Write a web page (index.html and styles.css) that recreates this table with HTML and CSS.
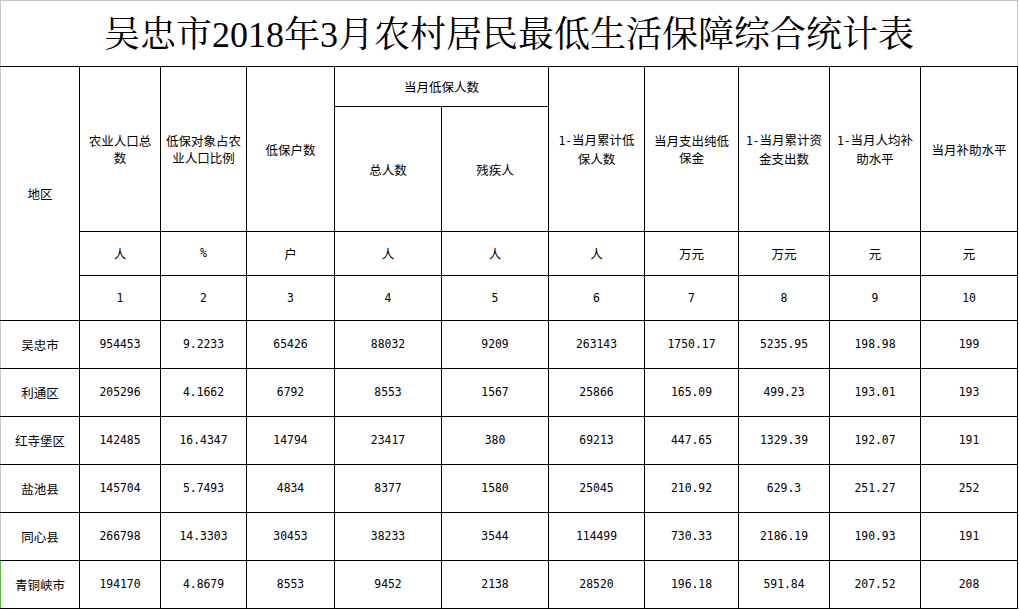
FILE: index.html
```html
<!DOCTYPE html>
<html lang="zh-CN">
<head>
<meta charset="utf-8">
<title>吴忠市2018年3月农村居民最低生活保障综合统计表</title>
<link rel="stylesheet" href="styles.css">
</head>
<body>
<table class="sheet">
  <colgroup>
    <col class="c0"><col class="c1"><col class="c2"><col class="c3"><col class="c4"><col class="c5"><col class="c6"><col class="c7"><col class="c8"><col class="c9"><col class="c10">
  </colgroup>
  <tr class="strip">
    <td></td><td></td><td></td><td></td><td></td><td></td><td></td><td></td><td></td><td></td><td></td>
  </tr>
  <tr class="title-row">
    <td class="title" colspan="11"><span class="num-s">吴忠市2018年3月农村居民最低生活保障综合统计表</span></td>
  </tr>
  <tr class="h1">
    <td class="area" rowspan="4">地区</td>
    <td class="hd" rowspan="2">农业人口总<br>数</td>
    <td class="hd" rowspan="2">低保对象占农<br>业人口比例</td>
    <td class="hd" rowspan="2">低保户数</td>
    <td class="hd" colspan="2">当月低保人数</td>
    <td class="hd" rowspan="2"><span class="n">1-</span>当月累计低<br>保人数</td>
    <td class="hd" rowspan="2">当月支出纯低<br>保金</td>
    <td class="hd" rowspan="2"><span class="n">1-</span>当月累计资<br>金支出数</td>
    <td class="hd" rowspan="2"><span class="n">1-</span>当月人均补<br>助水平</td>
    <td class="hd" rowspan="2">当月补助水平</td>
  </tr>
  <tr class="h2">
    <td class="hd">总人数</td>
    <td class="hd">残疾人</td>
  </tr>
  <tr class="units">
    <td class="hd">人</td>
    <td class="n">%</td>
    <td class="hd">户</td>
    <td class="hd">人</td>
    <td class="hd">人</td>
    <td class="hd">人</td>
    <td class="hd">万元</td>
    <td class="hd">万元</td>
    <td class="hd">元</td>
    <td class="hd">元</td>
  </tr>
  <tr class="idx">
    <td class="n">1</td><td class="n">2</td><td class="n">3</td><td class="n">4</td><td class="n">5</td><td class="n">6</td><td class="n">7</td><td class="n">8</td><td class="n">9</td><td class="n">10</td>
  </tr>
  <tr class="data">
    <td class="area">吴忠市</td><td class="n">954453</td><td class="n">9.2233</td><td class="n">65426</td><td class="n">88032</td><td class="n">9209</td><td class="n">263143</td><td class="n">1750.17</td><td class="n">5235.95</td><td class="n">198.98</td><td class="n">199</td>
  </tr>
  <tr class="data">
    <td class="area">利通区</td><td class="n">205296</td><td class="n">4.1662</td><td class="n">6792</td><td class="n">8553</td><td class="n">1567</td><td class="n">25866</td><td class="n">165.09</td><td class="n">499.23</td><td class="n">193.01</td><td class="n">193</td>
  </tr>
  <tr class="data">
    <td class="area">红寺堡区</td><td class="n">142485</td><td class="n">16.4347</td><td class="n">14794</td><td class="n">23417</td><td class="n">380</td><td class="n">69213</td><td class="n">447.65</td><td class="n">1329.39</td><td class="n">192.07</td><td class="n">191</td>
  </tr>
  <tr class="data">
    <td class="area">盐池县</td><td class="n">145704</td><td class="n">5.7493</td><td class="n">4834</td><td class="n">8377</td><td class="n">1580</td><td class="n">25045</td><td class="n">210.92</td><td class="n">629.3</td><td class="n">251.27</td><td class="n">252</td>
  </tr>
  <tr class="data">
    <td class="area">同心县</td><td class="n">266798</td><td class="n">14.3303</td><td class="n">30453</td><td class="n">38233</td><td class="n">3544</td><td class="n">114499</td><td class="n">730.33</td><td class="n">2186.19</td><td class="n">190.93</td><td class="n">191</td>
  </tr>
  <tr class="data last">
    <td class="area">青铜峡市</td><td class="n">194170</td><td class="n">4.8679</td><td class="n">8553</td><td class="n">9452</td><td class="n">2138</td><td class="n">28520</td><td class="n">196.18</td><td class="n">591.84</td><td class="n">207.52</td><td class="n">208</td>
  </tr>
</table>
</body>
</html>
```
FILE: styles.css
```css
html, body {
  margin: 0;
  padding: 0;
  background: #ffffff;
}

body {
  font-family: "Noto Sans CJK SC", sans-serif;
  color: #000;
}

.sheet {
  border-collapse: collapse;
  table-layout: fixed;
  width: 1018px;
}

.c0 { width: 79px; }
.c1 { width: 81px; }
.c2 { width: 86px; }
.c3 { width: 88px; }
.c4 { width: 107px; }
.c5 { width: 107px; }
.c6 { width: 96px; }
.c7 { width: 94px; }
.c8 { width: 91px; }
.c9 { width: 91px; }
.c10 { width: 97px; }

.sheet td {
  border: 1px solid #000;
  text-align: center;
  vertical-align: middle;
  padding: 0;
  font-size: 12.5px;
  line-height: 17px;
  overflow: hidden;
  white-space: nowrap;
}

.strip td {
  height: 0;
  padding: 0;
  border: none;
  border-right: 1px solid #c6c6c6;
  font-size: 0;
  line-height: 0;
}

.title-row .title {
  height: 63px;
  border-top: 1px solid #c6c6c6;
  border-left: 1px solid #c6c6c6;
  border-right: 1px solid #c6c6c6;
  border-bottom: 1px solid #000;
  font-family: "Liberation Serif", "Noto Serif CJK SC", "Noto Sans CJK SC", serif;
  font-size: 36px;
  line-height: 40px;
  letter-spacing: 0;
  padding-top: 2px;
}

.sheet td.area {
  border-left: 1px solid #c6c6c6;
}

.h1 td { height: 39px; }
.h2 td { height: 124px; }
.units td { height: 43px; }
.idx td { height: 44px; }
.data td { height: 47px; }

.sheet .last td.area {
  border-left: 1px solid #5fb94a;
}

.n, .sheet td.n {
  font-family: "DejaVu Sans Mono", "Liberation Mono", monospace;
  font-size: 11.4px;
}

.hd .n {
  font-size: 11.4px;
}
```
